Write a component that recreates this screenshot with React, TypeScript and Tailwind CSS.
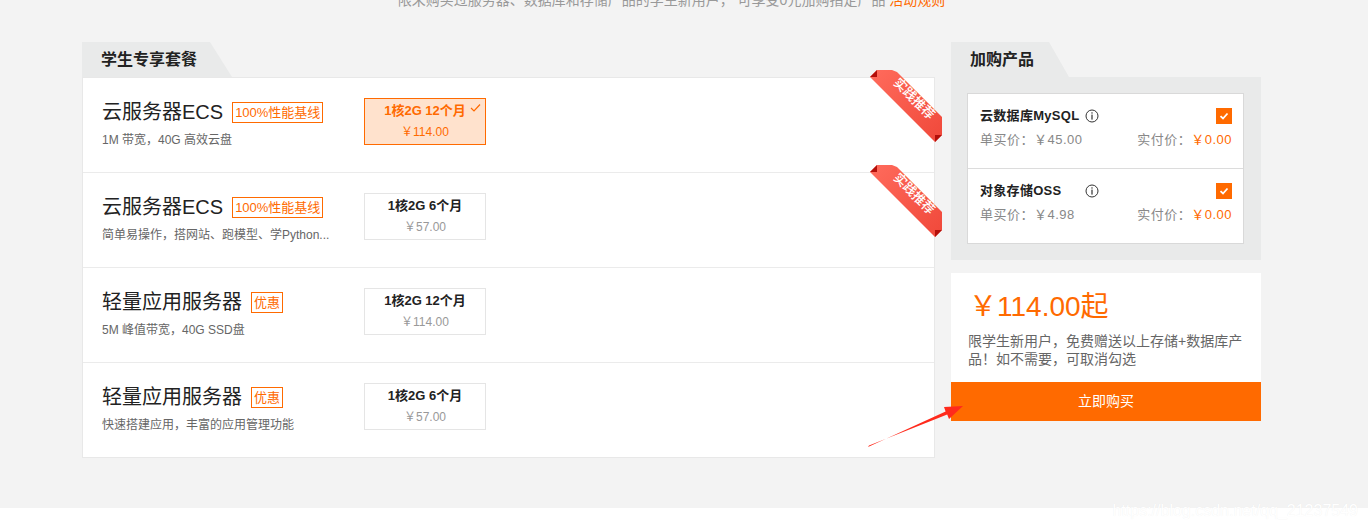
import React from "react";

type Row = {
  title: string;
  tag: string;
  sub: string;
  spec: string;
  price: string;
  selected?: boolean;
  ribbon?: boolean;
};

const rows: Row[] = [
  { title: "云服务器ECS", tag: "100%性能基线", sub: "1M 带宽，40G 高效云盘", spec: "1核2G 12个月", price: "￥114.00", selected: true, ribbon: true },
  { title: "云服务器ECS", tag: "100%性能基线", sub: "简单易操作，搭网站、跑模型、学Python...", spec: "1核2G 6个月", price: "￥57.00", ribbon: true },
  { title: "轻量应用服务器", tag: "优惠", sub: "5M 峰值带宽，40G SSD盘", spec: "1核2G 12个月", price: "￥114.00" },
  { title: "轻量应用服务器", tag: "优惠", sub: "快速搭建应用，丰富的应用管理功能", spec: "1核2G 6个月", price: "￥57.00" },
];

function Ribbon({ id }: { id: string }) {
  return (
    <svg
      className="absolute top-[-8px] right-[-9px] w-[73px] h-[73px] pointer-events-none"
      viewBox="0 0 73 73"
    >
      <defs>
        <linearGradient id={id} x1="0" y1="0" x2="1" y2="1">
          <stop offset="0" stopColor="#ff6b5c" />
          <stop offset="1" stopColor="#f0483a" />
        </linearGradient>
      </defs>
      <polygon points="0,7 7,0 22,0 27,2 72,47 72,65 65,72" fill={`url(#${id})`} />
      <polygon points="0,7 7,0 7,7" fill="#b30f0a" />
      <polygon points="65,72 72,65 65,65" fill="#b30f0a" />
      <text
        x="45"
        y="28"
        transform="rotate(45 45 28)"
        textAnchor="middle"
        dominantBaseline="central"
        fill="#ffffff"
        fontSize="13"
        fontWeight="500"
        fontFamily="'Noto Sans CJK SC', sans-serif"
      >
        实践推荐
      </text>
    </svg>
  );
}

function InfoIcon() {
  return (
    <svg width="14" height="14" viewBox="0 0 14 14" className="shrink-0">
      <circle cx="7" cy="7" r="6" fill="none" stroke="#333" strokeWidth="1" />
      <rect x="6.4" y="3.3" width="1.2" height="1.3" fill="#333" />
      <rect x="6.4" y="5.6" width="1.2" height="5" fill="#333" />
    </svg>
  );
}

function CheckBox() {
  return (
    <div className="w-[16px] h-[16px] bg-[#ff6a00] flex items-center justify-center">
      <svg width="10" height="10" viewBox="0 0 10 10">
        <polyline points="1.5,5.2 4,7.5 8.5,2.5" fill="none" stroke="#fff" strokeWidth="1.8" />
      </svg>
    </div>
  );
}

function AddOn({ name, single, first }: { name: string; single: string; first?: boolean }) {
  return (
    <div className={`h-[74px] pl-[12px] pr-[11px] pt-[13px] ${first ? "" : "border-t border-[#dcdcdc] h-[75px]"}`}>
      <div className="flex items-center justify-between h-[18px]">
        <div className="flex items-center">
          <span className="w-[105px] text-[13px] font-bold text-[#222] leading-[18px] tracking-[0.3px]">{name}</span>
          <InfoIcon />
        </div>
        <CheckBox />
      </div>
      <div className="flex justify-between mt-[6px] text-[13px] leading-[18px] text-[#888] tracking-[0.5px]">
        <span>单买价：{single}</span>
        <span>
          实付价：<span className="text-[#ff6a00]">￥0.00</span>
        </span>
      </div>
    </div>
  );
}

export default function App() {
  return (
    <div className="w-[1368px] h-[528px] relative overflow-hidden bg-white [font-family:'Liberation_Sans','Noto_Sans_CJK_SC',sans-serif]">
      <div className="h-[508px] bg-[#f3f3f3] pl-[82px] flex flex-col">
        <div className="w-[1179px] flex flex-col">
          <p className="mt-[-10px] h-[20px] text-center text-[14px] leading-[20px] text-[#999] whitespace-nowrap">
            限未购买过服务器、数据库和存储产品的学生新用户， 可享受0元加购指定产品 <span className="text-[#ff6a00]">活动规则</span>
          </p>
          <div className="flex items-start gap-[16px] mt-[32px]">
            {/* Left */}
            <div className="w-[853px]">
              <div className="w-[150px] h-[35px] bg-[#e9eaea] [clip-path:polygon(0_0,128px_0,100%_100%,0_100%)] pl-[19px] flex items-center text-[16px] font-bold text-[#222]">
                学生专享套餐
              </div>
              <div className="bg-white border border-[#e8e8e8]">
                {rows.map((r, i) => (
                  <div
                    key={i}
                    className={`relative h-[94px] flex items-start pt-[20px] pl-[19px] ${i > 0 ? "border-t border-[#ebebeb] h-[95px]" : ""}`}
                  >
                    <div className="w-[262px]">
                      <div className="flex items-center gap-[9px] h-[28px]">
                        <span className="text-[20px] leading-[28px] text-[#222]">{r.title}</span>
                        <span className="border border-[#ff6a00] h-[21px] px-[2px] text-[13px] leading-[19px] text-[#ff6a00]">
                          {r.tag}
                        </span>
                      </div>
                      <div className="mt-[5px] text-[12px] leading-[18px] text-[#666] whitespace-nowrap">{r.sub}</div>
                    </div>
                    <div
                      className={`relative w-[122px] h-[47px] border flex flex-col items-center ${
                        r.selected ? "bg-[#ffe2cd] border-[#ff6a00]" : "bg-white border-[#e5e5e5]"
                      }`}
                    >
                      <span
                        className={`mt-[3px] text-[13px] font-bold leading-[18px] ${r.selected ? "text-[#ff6a00]" : "text-[#222]"}`}
                      >
                        {r.spec}
                      </span>
                      <span className={`mt-[4px] text-[12px] leading-[16px] ${r.selected ? "text-[#ff6a00]" : "text-[#999]"}`}>
                        {r.price}
                      </span>
                      {r.selected && (
                        <svg className="absolute left-[105px] top-[4px]" width="11" height="10" viewBox="0 0 11 10">
                          <polyline points="1,5 4,8 10,1.5" fill="none" stroke="#ff6a00" strokeWidth="1.2" />
                        </svg>
                      )}
                    </div>
                    {r.ribbon && <Ribbon id={`rg${i}`} />}
                  </div>
                ))}
              </div>
            </div>
            {/* Right */}
            <div className="w-[310px]">
              <div className="w-[118px] h-[35px] bg-[#e9eaea] [clip-path:polygon(0_0,98px_0,100%_100%,0_100%)] pl-[19px] flex items-center text-[16px] font-bold text-[#222]">
                加购产品
              </div>
              <div className="bg-[#e9eaea] pt-[16px] pb-[16px] pl-[16px] pr-[17px]">
                <div className="bg-white border border-[#d9d9d9]">
                  <AddOn name="云数据库MySQL" single="￥45.00" first />
                  <AddOn name="对象存储OSS" single="￥4.98" />
                </div>
              </div>
              <div className="mt-[13px] bg-white">
                <div className="pt-[16px] px-[17px] pb-[14px]">
                  <div className="pl-[1px] text-[28px] leading-[36px] text-[#ff6a00]">￥114.00起</div>
                  <p className="mt-[7px] text-[14px] leading-[18px] text-[#666]">
                    限学生新用户，免费赠送以上存储+数据库产品！如不需要，可取消勾选
                  </p>
                </div>
                <div className="h-[39px] bg-[#ff6a00] text-white text-[14px] flex items-center justify-center">立即购买</div>
              </div>
            </div>
          </div>
        </div>
      </div>

      <svg className="absolute left-0 top-0 w-[1368px] h-[528px] pointer-events-none" viewBox="0 0 1368 528">
        <polygon
          points="868,447 945.6,411.4 944,407 963,406 949,419 947.2,414.6 869,445.6"
          fill="#ff2a1c"
        />
      </svg>

      <div className="absolute right-[10px] top-[502px] text-[16px] leading-[18px] text-white [text-shadow:0_0_1px_rgba(0,0,0,0.07)] whitespace-nowrap">
        https://blog.csdn.net/qq_21237549
      </div>
    </div>
  );
}
